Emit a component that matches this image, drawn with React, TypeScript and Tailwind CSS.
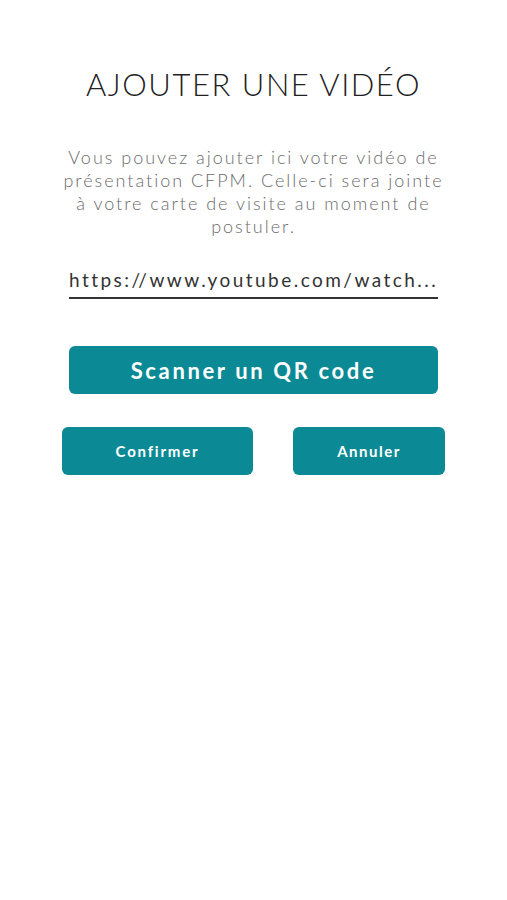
import React, { useState } from 'react';

const font = { fontFamily: 'Lato, "Open Sans", sans-serif' };

export default function App() {
  const [url, setUrl] = useState('https://www.youtube.com/watch...');

  return (
    <div className="min-h-[900px] w-full bg-white" style={font}>
      <div className="flex flex-col items-center pt-[66px]">
        <h1 className="text-[31px] font-light leading-[36px] tracking-[0.05em] text-[#222]">AJOUTER UNE VIDÉO</h1>

        <p className="mt-[44px] w-[384px] text-center text-[18px] font-light leading-[23px] tracking-[0.11em] text-[#6b6b6b]">
          Vous pouvez ajouter ici votre vidéo de présentation CFPM. Celle-ci sera jointe à votre carte de visite au moment de postuler.
        </p>

        <div className="mt-[29px] w-[369px] border-b-2 border-[#333]">
          <input
            value={url}
            onChange={(e) => setUrl(e.target.value)}
            className="w-full bg-transparent pb-[4px] text-[19px] leading-[26px] tracking-[0.13em] text-[#333] outline-none"
            style={font}
          />
        </div>

        <button className="mt-[47px] h-[48px] w-[369px] rounded-[6px] bg-[#0b8a95] text-[22px] font-bold tracking-[0.12em] text-white">
          Scanner un QR code
        </button>

        <div className="mt-[33px] flex w-[383px] justify-between">
          <button className="h-[48px] w-[191px] rounded-[6px] bg-[#0b8a95] text-[15px] font-bold tracking-[0.12em] text-white">
            Confirmer
          </button>
          <button className="h-[48px] w-[152px] rounded-[6px] bg-[#0b8a95] text-[15px] font-bold tracking-[0.1em] text-white">
            Annuler
          </button>
        </div>
      </div>
    </div>
  );
}
